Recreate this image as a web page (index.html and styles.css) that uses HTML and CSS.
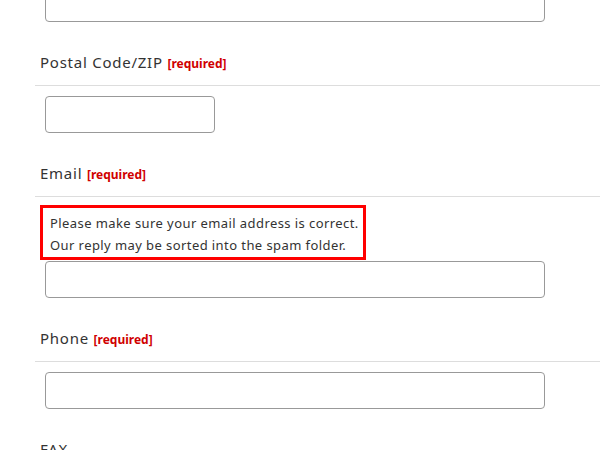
FILE: index.html
```html
<!DOCTYPE html>
<html lang="en">
<head>
<meta charset="utf-8">
<link rel="stylesheet" href="styles.css">
</head>
<body>
<form class="form">
  <div class="field field-first">
    <div class="body"><input class="input" type="text"></div>
  </div>
  <div class="field">
    <div class="label">Postal Code/ZIP <span class="req">[required]</span></div>
    <div class="body"><input class="input input-short" type="text"></div>
  </div>
  <div class="field">
    <div class="label">Email <span class="req">[required]</span></div>
    <div class="body">
      <div class="notice">Please make sure your email address is correct.<br>Our reply may be sorted into the spam folder.</div>
      <input class="input" type="text">
    </div>
  </div>
  <div class="field">
    <div class="label">Phone <span class="req">[required]</span></div>
    <div class="body"><input class="input" type="text"></div>
  </div>
  <div class="field">
    <div class="label">FAX</div>
    <div class="body"><input class="input" type="text"></div>
  </div>
</form>
</body>
</html>
```
FILE: styles.css
```css
html, body {
  margin: 0;
  padding: 0;
  background: #fff;
  overflow: hidden;
}
body {
  font-family: "Noto Sans", "Noto Sans CJK JP", sans-serif;
  color: #333;
}
.form {
  margin: -25px 0 0 35px;
}
.field-first .body {
  padding-top: 10px;
}
.label {
  font-size: 15px;
  line-height: 22px;
  height: 22px;
  padding: 29px 5px 12px;
  border-bottom: 1px solid #ddd;
  letter-spacing: 0.75px;
}
.req {
  color: #d00000;
  font-size: 12px;
  line-height: 1;
  font-weight: bold;
  letter-spacing: 0;
}
.body {
  padding: 10px 10px 0;
}
.input {
  display: block;
  box-sizing: border-box;
  width: 500px;
  height: 37px;
  margin: 0;
  border: 1px solid #999;
  border-radius: 4px;
  background: #fff;
}
.input-short {
  width: 170px;
}
.notice {
  display: inline-block;
  margin: -2px 0 1px -5px;
  padding: 4px 4px 1px 7px;
  border: 3px solid #f00;
  font-size: 13px;
  line-height: 22px;
  letter-spacing: 0.42px;
  color: #333;
}
```
